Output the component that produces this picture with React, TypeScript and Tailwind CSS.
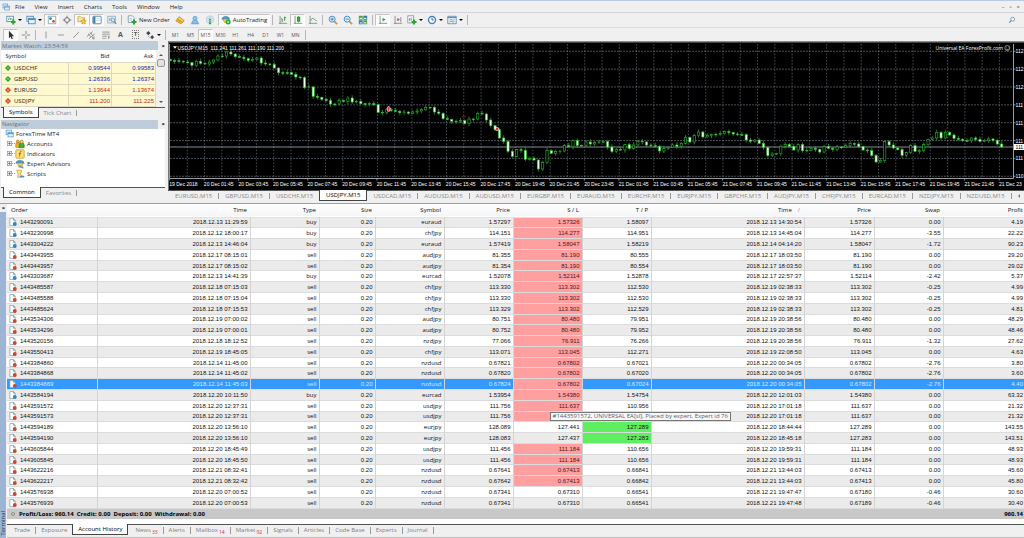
import React from 'react';
import clsx from 'clsx';

type Trade = [
  order: string,
  openTime: string,
  type: string,
  symbol: string,
  openPrice: string,
  sl: string,
  tp: string,
  closeTime: string,
  closePrice: string,
  swap: string,
  profit: string,
  hit: 'sl' | 'tp' | '',
];

const trades: Trade[] = [
  ['1443290091', '2018.12.13 11:29:59', 'buy', 'euraud', '1.57297', '1.57326', '1.58097', '2018.12.13 14:30:54', '1.57326', '0.00', '4.19', 'sl'],
  ['1443230998', '2018.12.12 18:00:17', 'buy', 'chfjpy', '114.151', '114.277', '114.951', '2018.12.13 14:45:04', '114.277', '-3.55', '22.22', 'sl'],
  ['1443304222', '2018.12.13 14:46:04', 'buy', 'euraud', '1.57419', '1.58047', '1.58219', '2018.12.14 04:14:20', '1.58047', '-1.72', '90.23', 'sl'],
  ['1443443955', '2018.12.17 08:15:01', 'sell', 'audjpy', '81.355', '81.190', '80.555', '2018.12.17 18:03:50', '81.190', '0.00', '29.20', 'sl'],
  ['1443443957', '2018.12.17 08:15:02', 'sell', 'audjpy', '81.354', '81.190', '80.554', '2018.12.17 18:03:50', '81.190', '0.00', '29.02', 'sl'],
  ['1443303687', '2018.12.13 14:41:39', 'buy', 'eurcad', '1.52078', '1.52114', '1.52878', '2018.12.17 22:57:37', '1.52114', '-2.42', '5.37', 'sl'],
  ['1443485587', '2018.12.18 07:15:03', 'sell', 'chfjpy', '113.330', '113.302', '112.530', '2018.12.19 02:38:33', '113.302', '-0.25', '4.99', 'sl'],
  ['1443485588', '2018.12.18 07:15:04', 'sell', 'chfjpy', '113.330', '113.302', '112.530', '2018.12.19 02:38:33', '113.302', '-0.25', '4.99', 'sl'],
  ['1443485624', '2018.12.18 07:15:53', 'sell', 'chfjpy', '113.329', '113.302', '112.529', '2018.12.19 02:38:33', '113.302', '-0.25', '4.81', 'sl'],
  ['1443534306', '2018.12.19 07:00:02', 'sell', 'audjpy', '80.751', '80.480', '79.951', '2018.12.19 20:38:56', '80.480', '0.00', '48.29', 'sl'],
  ['1443534296', '2018.12.19 07:00:01', 'sell', 'audjpy', '80.752', '80.480', '79.952', '2018.12.19 20:38:56', '80.480', '0.00', '48.46', 'sl'],
  ['1443520156', '2018.12.18 18:12:52', 'sell', 'nzdjpy', '77.066', '76.911', '76.266', '2018.12.19 20:38:56', '76.911', '-1.32', '27.62', 'sl'],
  ['1443550413', '2018.12.19 18:45:05', 'sell', 'chfjpy', '113.071', '113.045', '112.271', '2018.12.19 22:08:50', '113.045', '0.00', '4.63', 'sl'],
  ['1443384860', '2018.12.14 11:45:00', 'sell', 'nzdusd', '0.67821', '0.67802', '0.67021', '2018.12.20 00:34:05', '0.67802', '-2.76', '3.80', 'sl'],
  ['1443384868', '2018.12.14 11:45:02', 'sell', 'nzdusd', '0.67820', '0.67802', '0.67020', '2018.12.20 00:34:05', '0.67802', '-2.76', '3.60', 'sl'],
  ['1443384869', '2018.12.14 11:45:03', 'sell', 'nzdusd', '0.67824', '0.67802', '0.67024', '2018.12.20 00:34:05', '0.67802', '-2.76', '4.40', 'sl'],
  ['1443584194', '2018.12.20 10:11:50', 'buy', 'eurcad', '1.53954', '1.54380', '1.54754', '2018.12.20 12:01:03', '1.54380', '0.00', '63.32', 'sl'],
  ['1443591572', '2018.12.20 12:37:31', 'sell', 'usdjpy', '111.756', '111.637', '110.956', '2018.12.20 17:01:18', '111.637', '0.00', '21.32', 'sl'],
  ['1443591573', '2018.12.20 12:37:31', 'sell', 'usdjpy', '111.756', '', '', '2018.12.20 17:01:18', '111.637', '0.00', '21.32', 'sl'],
  ['1443594189', '2018.12.20 13:56:10', 'sell', 'eurjpy', '128.089', '127.441', '127.289', '2018.12.20 18:44:44', '127.289', '0.00', '143.55', 'tp'],
  ['1443594190', '2018.12.20 13:56:10', 'sell', 'eurjpy', '128.083', '127.437', '127.283', '2018.12.20 18:45:18', '127.283', '0.00', '143.51', 'tp'],
  ['1443605844', '2018.12.20 18:45:49', 'sell', 'usdjpy', '111.456', '111.184', '110.656', '2018.12.20 19:59:31', '111.184', '0.00', '48.93', 'sl'],
  ['1443605845', '2018.12.20 18:45:50', 'sell', 'usdjpy', '111.456', '111.184', '110.656', '2018.12.20 19:59:31', '111.184', '0.00', '48.93', 'sl'],
  ['1443622216', '2018.12.21 08:32:41', 'sell', 'nzdusd', '0.67641', '0.67413', '0.66841', '2018.12.21 13:44:03', '0.67413', '0.00', '45.60', 'sl'],
  ['1443622217', '2018.12.21 08:32:42', 'sell', 'nzdusd', '0.67642', '0.67413', '0.66842', '2018.12.21 13:44:03', '0.67413', '0.00', '45.80', 'sl'],
  ['1443576938', '2018.12.20 07:00:52', 'sell', 'nzdusd', '0.67341', '0.67310', '0.66541', '2018.12.21 19:47:47', '0.67180', '-0.46', '30.60', ''],
  ['1443576939', '2018.12.20 07:00:53', 'sell', 'nzdusd', '0.67341', '0.67310', '0.66541', '2018.12.21 19:47:48', '0.67189', '-0.46', '30.40', ''],
];

const SELECTED = '1443384869';
const HOVERED = '1443591573';

const quotes = [
  { symbol: 'USDCHF', bid: '0.99544', ask: '0.99583', up: true },
  { symbol: 'GBPUSD', bid: '1.26336', ask: '1.26374', up: true },
  { symbol: 'EURUSD', bid: '1.13644', ask: '1.13674', up: false },
  { symbol: 'USDJPY', bid: '111.200', ask: '111.225', up: false },
];

const chartTabs = [
  'EURUSD', 'GBPUSD', 'USDCHF', 'USDJPY', 'USDCAD', 'AUDUSD', 'AUDUSD', 'EURGBP', 'EURAUD',
  'EURCHF', 'EURJPY', 'GBPCHF', 'AUDJPY', 'CHFJPY', 'EURCAD', 'NZDJPY', 'NZDUSD',
];

const terminalTabs: { name: string; count?: number }[] = [
  { name: 'Trade' },
  { name: 'Exposure' },
  { name: 'Account History' },
  { name: 'News', count: 33 },
  { name: 'Alerts' },
  { name: 'Mailbox', count: 14 },
  { name: 'Market', count: 92 },
  { name: 'Signals' },
  { name: 'Articles' },
  { name: 'Code Base' },
  { name: 'Experts' },
  { name: 'Journal' },
];

// close of every M15 bar, in thirds of a pixel below the chart's top
const closes = [
  68, 68, 70, 72, 74, 82, 70, 76, 78, 72, 66, 54, 54, 42, 48, 56, 58, 62, 67, 64, 60, 75, 78, 79,
  90, 104, 104, 104, 109, 117, 119, 149, 147, 175, 178, 184, 188, 198, 198, 188, 190, 180, 192, 190,
  197, 199, 197, 200, 223, 223, 215, 218, 220, 224, 222, 226, 222, 219, 215, 208, 208, 222, 226, 242,
  244, 250, 251, 248, 257, 243, 243, 226, 228, 246, 263, 275, 300, 310, 340, 355, 335, 337, 364, 361,
  366, 393, 374, 338, 346, 341, 339, 323, 326, 308, 322, 322, 312, 318, 313, 312, 311, 327, 341, 334,
  336, 320, 331, 321, 310, 312, 321, 323, 325, 339, 331, 328, 321, 325, 316, 298, 312, 293, 282, 297,
  293, 289, 290, 287, 281, 284, 288, 290, 290, 306, 310, 306, 316, 328, 353, 348, 347, 325, 320, 325,
  336, 319, 338, 337, 331, 334, 342, 326, 331, 334, 327, 327, 322, 317, 318, 326, 336, 338, 352, 372,
  367, 311, 321, 330, 335, 352, 344, 323, 340, 337, 320, 304, 300, 283, 300, 283, 291, 301, 304, 308,
  308, 300, 304, 310, 307, 303, 307, 318, 327,
];

const timeLabels = ['19 Dec 2018'];
for (const day of ['20', '21']) {
  for (let h = 1; h < 23; h += 2) {
    timeLabels.push(`${day} Dec ${String(h).padStart(2, '0')}:45`);
  }
  // the last label has no room for its minutes
  timeLabels.push(day === '20' ? '20 Dec 23:45' : '21 Dec 23');
}

const priceLabels = ['112', '112', '112', '111', '111', '111', '111', '110'];

const BAR_STEP = 4.33;

const Chart: React.FC = () => (
  <svg
    aria-label="USDJPY M15 chart"
    className="block w-full bg-black"
    viewBox="0 0 856 149"
    fontFamily="Liberation Sans, sans-serif"
    fontSize="5"
    fill="#fff"
  >
    <rect width="856" height="1.5" fill="#8a8a8a" />
    <rect width="1" height="149" fill="#777" />
    <g stroke="#76828e" strokeWidth="0.6" strokeDasharray="1.6 1.6">
      {Array.from({ length: 48 }, (_, i) => (
        <line key={i} x1={19.3 + i * 17.28} x2={19.3 + i * 17.28} y1="3" y2="136" />
      ))}
      {priceLabels.map((_, i) => (
        <line key={i} x1="2" x2="845" y1={10.3 + i * 17.85} y2={10.3 + i * 17.85} strokeDasharray="2 1" />
      ))}
    </g>
    <path d="M1.5 3V137.5H845.5V3" fill="none" stroke="#c4c4c4" strokeWidth="0.8" />
    <line x1="2" x2="845" y1="106" y2="106" stroke="#8f9bab" strokeWidth="0.9" />

    {closes.map((close, i) => {
      const open = i === 0 ? 64 : closes[i - 1];
      const falling = close >= open;
      const x = 2.3 + i * BAR_STEP;
      const top = Math.min(open, close) / 3 - 3;
      const h = Math.max(Math.abs(close - open) / 3, 0.6);
      const above = 0.8 + ((i * 7) % 5) * 0.5;
      const below = 0.8 + ((i * 11) % 4) * 0.6;
      return (
        <g key={i} stroke="#29b829">
          <line x1={x} x2={x} y1={top - above} y2={top + h + below} strokeWidth="0.7" />
          <rect
            x={x - 1.1}
            y={top}
            width="2.2"
            height={h}
            fill={falling ? '#e4ffe0' : '#000'}
            strokeWidth="0.6"
          />
        </g>
      );
    })}

    <g fill="#e02020" stroke="#fff" strokeWidth="0.6">
      <path d="M220.7 65l2 2.6h-1v2.6h-2v-2.6h-1z" />
      <circle cx="329" cy="88" r="1.6" />
    </g>
    <path d="M294 75.5h4M341 107h5" stroke="#a01818" strokeWidth="0.7" />

    <path d="M5 5.2h4l-2 2.6z" />
    <text x="9.5" y="8.5">USDJPY,M15&#160; 111.241 111.261 111.190 111.200</text>
    <text x="835" y="8.8" textAnchor="end" fontSize="5" fontFamily="Open Sans, sans-serif">
      Universal EA ForexProfit.com
    </text>
    <g fill="none" stroke="#ddd" strokeWidth="0.6">
      <circle cx="839.3" cy="7" r="2.5" />
      <path d="M838.2 6.2h.5M840 6.2h.5M838 8q1.3 1 2.6 0" />
    </g>

    {timeLabels.map((label, i) => (
      <g key={label}>
        <line x1={1.5 + i * 34.57} x2={1.5 + i * 34.57} y1="137.5" y2="139.5" stroke="#c4c4c4" strokeWidth="0.7" />
        <text x={1.3 + i * 34.57} y="144.5">{label}</text>
      </g>
    ))}
    {priceLabels.map((label, i) => (
      <g key={i}>
        <line x1="845.5" x2="847.5" y1={10.3 + i * 17.85} y2={10.3 + i * 17.85} stroke="#c4c4c4" strokeWidth="0.7" />
        <text x="847.5" y={12.3 + i * 17.85}>{label}</text>
      </g>
    ))}
    <rect x="846" y="103" width="10" height="6" />
    <text x="847.5" y="108" fill="#000">111</text>
  </svg>
);

const icons: Record<string, React.ReactNode> = {
  app: (
    <g fill="#dceefa" stroke="#5b9bc8">
      <rect x="1.5" y="1.5" width="7" height="6" />
      <rect x="4" y="4.5" width="7" height="6" />
      <path d="M4 6h7" strokeWidth="1.5" />
    </g>
  ),
  newChart: (
    <g>
      <rect x="1" y="1.5" width="8" height="6.5" fill="#fff" stroke="#4d87b5" />
      <path d="M3 6l1-3M5.5 6V3.5M7.3 6V4" stroke="#3a9a3a" />
      <path d="M6 8.5h5.5M8.7 5.8v5.5" stroke="#1fae2b" strokeWidth="2.4" />
    </g>
  ),
  profiles: (
    <g fill="#e3f1fb" stroke="#4d87b5">
      <rect x="1" y="1.5" width="8" height="6" />
      <rect x="3" y="4" width="8" height="6.5" />
      <path d="M3 5.2h8" strokeWidth="1.6" />
    </g>
  ),
  market: (
    <g>
      <rect x="1.5" y="1.5" width="9" height="9" fill="#fff" stroke="#7fa8c9" />
      <circle cx="4.3" cy="4.3" r="1.7" fill="#22a63a" />
      <circle cx="7.8" cy="7.6" r="1.7" fill="#e0482c" />
    </g>
  ),
  target: (
    <g fill="none" stroke="#6f6f6f">
      <circle cx="6" cy="6" r="3" />
      <path d="M6 0.8v3.4M6 7.8v3.4M0.8 6h3.4M7.8 6h3.4" />
    </g>
  ),
  star: (
    <g>
      <path d="M1 2h3.5l1 1.2H9V8H1z" fill="#ffe69a" stroke="#c9982a" strokeWidth="0.8" />
      <path d="M7.8 4.6l1 2.1 2.2.3-1.6 1.5.4 2.3-2-1.1-2 1.1.4-2.3L4.6 7l2.2-.3z" fill="#ffcf3d" stroke="#b98513" strokeWidth="0.7" />
    </g>
  ),
  panel: (
    <g>
      <rect x="1" y="1.5" width="10" height="9" rx="1" fill="#fff" stroke="#3f7cb0" />
      <rect x="1.5" y="2" width="2.6" height="8" fill="#3f7cb0" />
      <path d="M5.5 4.5h4M5.5 6.5h4" stroke="#b9d3e8" />
    </g>
  ),
  tester: (
    <g fill="none">
      <rect x="1" y="1.5" width="9" height="8" fill="#eef5fb" stroke="#88a9c4" />
      <path d="M3 7V4M5 7.5V3" stroke="#7a96ac" />
      <circle cx="7" cy="6" r="2.2" fill="#d5e8f7" stroke="#6e97b7" />
      <path d="M8.6 7.8l2.4 3" stroke="#8a7a5a" strokeWidth="1.4" />
    </g>
  ),
  order: (
    <g>
      <path d="M1.5 1h5l2 2v6h-7z" fill="#fff" stroke="#7a93a8" />
      <path d="M3 4h3M3 6h3" stroke="#9bb" />
      <path d="M5.4 8.4h6M8.4 5.4v6" stroke="#1fae2b" strokeWidth="2.4" />
    </g>
  ),
  gold: (
    <g stroke="#b97d12" strokeWidth="0.7">
      <path d="M1 7L5 2.2l6 4.6-4 3.8z" fill="#eda92a" />
      <path d="M3 4.6L5 2.2l6 4.6-1.8 1.7z" fill="#fbd56b" />
    </g>
  ),
  person: (
    <g fill="#8cc4ee" stroke="#4d8dc0" strokeWidth="0.7">
      <circle cx="6" cy="4" r="2.5" />
      <path d="M2 10q.4-4 4-3.5 3.6-.5 4 3.5z" />
      <path d="M1 10.6h10" />
    </g>
  ),
  signal: (
    <g fill="none" stroke="#a9c9e2">
      <circle cx="6" cy="5.5" r="4.5" />
      <circle cx="6" cy="5.5" r="2.6" />
      <path d="M6 5.5L4.5 11h3z" fill="#35a848" stroke="none" />
      <circle cx="6" cy="5.5" r="1.3" fill="#35a848" stroke="none" />
    </g>
  ),
  auto: (
    <g>
      <path d="M1 5q0-2.6 4.5-3.6Q10 2 10.5 5z" fill="#4c9fd6" stroke="#2f6f9e" strokeWidth="0.6" />
      <path d="M2.5 5h6.5l-1 4h-4z" fill="#f6cf5b" stroke="#a98316" strokeWidth="0.6" />
      <circle cx="8.6" cy="8.4" r="3" fill="#1fa637" />
      <path d="M7.8 6.9v3l2.3-1.5z" fill="#fff" />
    </g>
  ),
  bars: (
    <g fill="none" stroke="#777" strokeWidth="0.9">
      <path d="M2.5 1v9.5M1 10h10" />
      <path d="M5 4.5v4M5 4.5H4M8 2v5M8 3h1.5" stroke="#2f9a3c" strokeWidth="1.2" />
    </g>
  ),
  candles: (
    <g fill="none" stroke="#777" strokeWidth="0.9">
      <path d="M2.5 1v9.5M1 10h10" />
      <path d="M6.8 1v8" stroke="#2f9a3c" />
      <rect x="5.4" y="2.6" width="2.8" height="4.8" fill="#2fb43f" stroke="#1d7f2b" />
    </g>
  ),
  line: (
    <g fill="none" stroke="#777" strokeWidth="0.9">
      <path d="M2.5 1v9.5M1 10h10" />
      <path d="M3 7q2-4.5 4-2.5t3.5 2.5" stroke="#2f9a3c" />
    </g>
  ),
  zoomIn: (
    <g fill="none">
      <path d="M7 7l4 4" stroke="#c79a38" strokeWidth="2" />
      <circle cx="5" cy="5" r="3.6" fill="#d9efff" stroke="#3e88c0" strokeWidth="1.1" />
      <path d="M3.2 5h3.6M5 3.2v3.6" stroke="#2b6fa8" />
    </g>
  ),
  zoomOut: (
    <g fill="none">
      <path d="M7 7l4 4" stroke="#c79a38" strokeWidth="2" />
      <circle cx="5" cy="5" r="3.6" fill="#d9efff" stroke="#3e88c0" strokeWidth="1.1" />
      <path d="M3.2 5h3.6" stroke="#2b6fa8" />
    </g>
  ),
  tile: (
    <g>
      <path d="M1 1h4.6v4.6H1zM6.4 6.4H11V11H6.4z" fill="#3fa83c" />
      <path d="M6.4 1H11v4.6H6.4zM1 6.4h4.6V11H1z" fill="#3572b3" />
      <path d="M2 3.2h2.6v1.6H2zM7.4 3.2H10v1.6H7.4zM2 8.6h2.6v1.6H2zM7.4 8.6H10v1.6H7.4z" fill="#e4f3e4" />
    </g>
  ),
  scroll: (
    <g fill="none" stroke="#777" strokeWidth="0.9">
      <path d="M2.5 1v9.5M1 10h10" />
      <path d="M5.5 3.2v4.6L9 5.5z" fill="#2fa53d" stroke="none" />
    </g>
  ),
  shift: (
    <g fill="none" stroke="#777" strokeWidth="0.9">
      <path d="M2.5 1v9.5M1 10h10M9.3 2.5v6" />
      <path d="M5.2 3.5v4l3-2z" fill="#b04a3a" stroke="none" />
    </g>
  ),
  indicator: (
    <g>
      <rect x="1" y="1" width="7" height="8.5" fill="#fff" stroke="#7a93a8" />
      <path d="M3 7V4M5 7V3" stroke="#3a9a3a" />
      <path d="M5.4 8.4h6M8.4 5.4v6" stroke="#1fae2b" strokeWidth="2.4" />
    </g>
  ),
  clock: (
    <g>
      <circle cx="6" cy="6" r="5" fill="#3c82c4" />
      <circle cx="6" cy="6" r="3.4" fill="#fff" />
      <path d="M6 3.6V6h2" fill="none" stroke="#345" />
    </g>
  ),
  template: (
    <g fill="none">
      <rect x="1" y="1.5" width="10" height="9" fill="#eef5fb" stroke="#5b8db5" />
      <path d="M1 3h10" stroke="#5b8db5" strokeWidth="1.4" />
      <path d="M3 6.2l2-1 2 1 2-1" stroke="#c77" />
      <path d="M3 8.5l2-1 2 1 2-1" stroke="#4a4" />
    </g>
  ),
  cursor: <path d="M3.5 1v9l2-2 1.3 3 1.4-.6L7 7.6h2.8z" fill="#333" />,
  cross: <path d="M6 1v4M6 7v4M1 6h4M7 6h4" stroke="#777" />,
  vline: <path d="M6 2v8" stroke="#888" />,
  hline: <path d="M2.5 6h7" stroke="#888" />,
  trend: <path d="M2.5 9.5l7-7" stroke="#888" />,
  channel: (
    <g stroke="#777" strokeWidth="0.9">
      <path d="M1 8l7-6M3.5 10.5l7-6M2.5 4.5L6 8M5 3l3.5 4" />
      <path d="M8 8.5h2.5M8 10.5h2.5M8 8.5v2" />
    </g>
  ),
  fibo: (
    <g stroke="#888">
      <path d="M1.5 2.5h9M1.5 5h9M1.5 7.5h6" />
      <path d="M9 7v4M9 7.5h2M9 9.2h1.6M1.5 10h5" strokeWidth="0.8" />
    </g>
  ),
  arrows: (
    <g fill="#444">
      <path d="M4 1.2l2.6 2.6L4 6.4 1.4 3.8z" />
      <path d="M8.6 6.4l2 2.2-2 2.2-2-2.2zM3.5 7.2l2 2" stroke="#444" strokeWidth="0.5" />
    </g>
  ),
  search: (
    <g fill="none" stroke="#4b86b8">
      <circle cx="7" cy="4.8" r="3" />
      <path d="M4.8 7L1.8 10" strokeWidth="1.6" />
    </g>
  ),
  accounts: (
    <g strokeWidth="0.7">
      <path d="M1 10V6q0-2 2.4-2T6 6v4z" fill="#e8b62c" stroke="#96701a" />
      <circle cx="3.4" cy="3" r="1.8" fill="#e8b62c" stroke="#96701a" />
      <path d="M5 10.5V7q0-2.4 3-2.4T11 7v3.5z" fill="#46ab35" stroke="#2a701d" />
      <circle cx="8" cy="3.4" r="2" fill="#f1cf62" stroke="#96701a" />
    </g>
  ),
  fx: (
    <g>
      <rect x="1" y="1" width="10" height="10" rx="1" fill="#ffe07a" stroke="#c99e2d" />
      <path d="M7.8 3q-1.6-.6-1.8 1.2L5.2 9M4.4 5.6h3" fill="none" stroke="#8a6410" />
    </g>
  ),
  expert: (
    <g>
      <path d="M1 5q0-3 5-3.6Q11 2 11 5z" fill="#4c9fd6" stroke="#2f6f9e" strokeWidth="0.6" />
      <path d="M3 5h6.5l-1 5h-4z" fill="#f6cf5b" stroke="#a98316" strokeWidth="0.6" />
      <path d="M5 8l5 3" stroke="#4c9fd6" strokeWidth="1.6" />
    </g>
  ),
  script: (
    <g>
      <path d="M2 1.5h6L6.5 6 9 10H3l1-4z" fill="#ffe28a" stroke="#c79a2c" strokeWidth="0.8" />
      <path d="M6 9.2q3-1.6 5 .6" fill="none" stroke="#3f87bd" strokeWidth="1.6" />
    </g>
  ),
};

const Icon: React.FC<{ name: string; className?: string }> = ({ name, className }) => (
  <svg viewBox="0 0 12 12" fill="none" aria-hidden="true" className={clsx('shrink-0', className ?? 'size-[10px]')}>
    {icons[name]}
  </svg>
);

const Caret = () => <span className="border-x-2 border-t-2 border-x-transparent border-t-black" />;
const Grip = () => <span className="mx-[2px] h-[10px] w-px bg-[#b5b5b5]" />;

interface ToolProps {
  label: string;
  icon?: string;
  active?: boolean;
  caret?: boolean;
  wide?: boolean;
  children?: React.ReactNode;
}

const Tool: React.FC<ToolProps> = ({ label, icon, active, caret, wide, children }) => (
  <button
    type="button"
    aria-label={label}
    className={clsx(
      'flex h-3 items-center justify-center gap-[2px] border',
      caret ? 'w-5' : wide ? 'px-[2px]' : 'w-[15px]',
      active ? 'border-[#c3c3c3] border-r-white border-b-white bg-[#fafafa]' : 'border-transparent',
    )}
  >
    {icon && <Icon name={icon} />}
    {children}
    {caret && <Caret />}
  </button>
);

const PanelTitle: React.FC<{ title: string }> = ({ title }) => (
  <div className="flex h-[9px] items-center justify-between">
    <span className="mr-[4px] flex h-full grow items-center bg-[#bfcddb] pl-px text-[#66737f]">{title}</span>
    <button type="button" aria-label={`Close ${title}`} className="font-bold text-black">×</button>
  </div>
);

const PanelTabs: React.FC<{ active: string; other: string }> = ({ active, other }) => (
  <div className="flex h-[11px] border-t border-[#555] pl-[2px] text-[#888]">
    <button type="button" className="-mt-px border border-t-0 border-[#444] bg-white px-[5px] text-black">{active}</button>
    <button type="button" className="px-[5px]">{other}</button>
    <span className="my-[2px] w-px bg-[#999]" />
  </div>
);

const MarketWatch = () => (
  <section className="bg-[#f0f0f0]">
    <PanelTitle title="Market Watch: 23:54:59" />
    <div className="flex bg-white">
      <table className="grow table-fixed border-collapse">
        <colgroup>
          <col className="w-[67px]" />
          <col />
          <col className="w-11" />
        </colgroup>
        <thead>
          <tr className="h-3">
            <th className="pl-1 text-left font-normal">Symbol</th>
            <th className="pr-[2px] text-right font-normal">Bid</th>
            <th className="pr-[2px] text-right font-normal">Ask</th>
          </tr>
        </thead>
        <tbody>
          {quotes.map(({ symbol, bid, ask, up }) => (
            <tr key={symbol} className="h-[11px] border border-[#ddd9c0] bg-[#fff9cf]">
              <td className="border-r border-[#ddd9c0] pl-[3px]">
                <span className="flex items-center gap-[3px]">
                  <svg viewBox="0 0 6 6" className="size-[6px]" aria-hidden="true">
                    <path d="M3 0l3 3-3 3-3-3z" fill={up ? '#2a9d2a' : '#d4471d'} />
                    <path d={up ? 'M3 1.4L4.6 3.4H1.4z' : 'M3 4.6L4.6 2.6H1.4z'} fill="#fff" opacity="0.5" />
                  </svg>
                  {symbol}
                </span>
              </td>
              {[bid, ask].map((price) => (
                <td
                  key={price}
                  className={clsx(
                    "border-r border-[#ddd9c0] pr-px text-right font-['Liberation_Sans',sans-serif]",
                    up ? 'text-[#2020b0]' : 'text-[#c22a1a]',
                  )}
                >
                  {price}
                </td>
              ))}
            </tr>
          ))}
        </tbody>
      </table>
      <div className="flex w-[9px] flex-col items-center bg-[#f0f0f0] py-1">
        <span className="border-x-2 border-b-2 border-x-transparent border-b-[#555]" />
        <span className="mt-[3px] h-2 w-[8px] rounded-xs border border-[#999] bg-[#e2e2e2]" />
        <span className="mt-auto border-x-2 border-t-2 border-x-transparent border-t-[#555]" />
      </div>
    </div>
    <PanelTabs active="Symbols" other="Tick Chart" />
  </section>
);

const navItems = [
  { label: 'Accounts', icon: 'accounts' },
  { label: 'Indicators', icon: 'fx' },
  { label: 'Expert Advisors', icon: 'expert' },
  { label: 'Scripts', icon: 'script' },
];

const Navigator = () => (
  <section className="mt-[2px] flex grow flex-col">
    <PanelTitle title="Navigator" />
    <ul className="grow bg-white pl-1">
      <li className="flex h-[10px] items-center gap-[2px]">
        <Icon name="app" className="size-[9px]" />
        ForexTime MT4
      </li>
      {navItems.map(({ label, icon }) => (
        <li key={label} className="flex h-[10px] items-center pl-[2px]">
          <svg viewBox="0 0 8 8" className="size-[5px]" fill="none" stroke="#8a8a8a" aria-hidden="true">
            <rect x="0.5" y="0.5" width="7" height="7" fill="#f4f4f4" />
            <path d="M2 4h4M4 2v4" stroke="#446" />
          </svg>
          <span className="w-[3px] border-t border-dotted border-[#999]" />
          <Icon name={icon} className="mr-[2px] size-[10px]" />
          {label}
        </li>
      ))}
    </ul>
    <PanelTabs active="Common" other="Favorites" />
  </section>
);

const TradeRow: React.FC<{ trade: Trade; index: number }> = ({ trade, index }) => {
  const [order, openTime, type, symbol, openPrice, sl, tp, closeTime, closePrice, swap, profit, hit] = trade;
  const selected = order === SELECTED;
  const td = 'border-r border-[#d4d4d4] pr-[2px]';
  return (
    <tr
      className={clsx(
        'border-b border-[#dcdcdc]',
        selected ? 'bg-[#3399ff] text-[#d5e9ff]' : index % 2 === 0 ? 'bg-[#ebebeb]' : 'bg-white',
      )}
    >
      <td className="border-r border-[#d4d4d4] pl-[2px] text-left">
        <span className="flex items-center gap-[3px]">
          <svg viewBox="0 0 9 9" className="size-[8px]" aria-hidden="true">
            <path d="M1 .5h4L7 2.5v6H1z" fill="#fff" stroke="#8a98a5" strokeWidth="0.8" />
            <path d="M5 .5v2h2" fill="none" stroke="#4d9a7a" strokeWidth="0.8" />
            <circle cx="6.5" cy="6.7" r="2.2" fill={type === 'buy' ? '#2f86c9' : '#d1452e'} />
          </svg>
          {order}
        </span>
      </td>
      <td className={td}>{openTime}</td>
      <td className={clsx(td, "font-['Open_Sans',sans-serif]")}>{type}</td>
      <td className={td}>0.20</td>
      <td className={clsx(td, "font-['Open_Sans',sans-serif]")}>{symbol}</td>
      <td className={td}>{openPrice}</td>
      <td className={clsx(td, 'relative', hit === 'sl' && 'bg-[#ff9f9f] text-[#4a1818]')}>
        {sl}
        {order === HOVERED && (
          <span
            role="tooltip"
            className="absolute inset-y-0 left-9 z-10 flex items-center border border-[#767676] bg-[#f8f8fb] px-[2px] font-['Open_Sans',sans-serif] whitespace-nowrap text-[#5c5c68]"
          >
            #1443591572, UNIVERSAL EA[sl], Placed by expert, Expert id 76
          </span>
        )}
      </td>
      <td className={clsx(td, hit === 'tp' && 'bg-[#5fee5f]')}>{tp}</td>
      <td className={td}>{closeTime}</td>
      <td className={td}>{closePrice}</td>
      <td className={td}>{swap}</td>
      <td className="pr-px">{profit}</td>
    </tr>
  );
};

const AccountHistory = () => (
  <table className="h-[305px] w-full table-fixed border-collapse bg-white text-right font-['Liberation_Sans',sans-serif] text-[#111]">
    <colgroup>
      <col className="w-[90px]" />
      <col className="w-[153px]" />
      <col className="w-[69px]" />
      <col className="w-14" />
      <col className="w-[69px]" />
      <col className="w-[69px]" />
      <col className="w-[69px]" />
      <col className="w-[69px]" />
      <col className="w-[153px]" />
      <col className="w-[70px]" />
      <col className="w-[69px]" />
      <col />
    </colgroup>
    <thead className="font-['Open_Sans',sans-serif]">
      <tr className="h-[13px] border-b border-[#e2e2e2] bg-linear-to-b from-white to-[#f4f5f7]">
        <th className="pl-1 text-left font-normal">Order</th>
        {['Time', 'Type', 'Size', 'Symbol', 'Price', 'S / L', 'T / P'].map((name) => (
          <th key={name} className="pr-[3px] font-normal">{name}</th>
        ))}
        <th className="pr-1 font-normal">
          Time<span className="pl-[6px] text-[#888]">∕</span>
        </th>
        <th className="pr-[3px] font-normal">Price</th>
        <th className="pr-[3px] font-normal">Swap</th>
        <th className="pr-px font-normal">Profit</th>
      </tr>
    </thead>
    <tbody>
      {trades.map((trade, index) => (
        <TradeRow key={trade[0]} trade={trade} index={index} />
      ))}
    </tbody>
  </table>
);

const Terminal = () => (
  <section className="flex border-t border-[#a0a0a0]">
    <div className="flex w-[7px] shrink-0 flex-col items-center">
      <button type="button" aria-label="Close terminal" className="h-2 font-bold text-black">×</button>
      <div className="flex w-[6px] grow items-end justify-center self-start bg-[#9cb5d4] pb-[2px]">
        <span className="rotate-180 text-[#26364a] [writing-mode:vertical-rl]">Terminal</span>
      </div>
    </div>
    <div className="min-w-0 grow">
      <AccountHistory />
      <div className="flex h-[10px] items-center bg-[#c8c8c8] pr-px font-bold text-black">
        <span className="mr-1 ml-1 size-[4px] rounded-full border border-[#8f8f8f]" />
        <span>Profit/Loss: 960.14&nbsp; Credit: 0.00&nbsp; Deposit: 0.00&nbsp; Withdrawal: 0.00</span>
        <span className="ml-auto">960.14</span>
      </div>
      <div className="h-[5px] bg-white" />
      <nav className="flex h-[14px] items-start border-t border-b border-t-[#555] border-b-[#c0c0c0] pl-[2px] text-[#808080]">
        {terminalTabs.map(({ name, count }, i) =>
          name === 'Account History' ? (
            <button key={name} type="button" className="-mt-px mr-[2px] h-[11px] border border-t-0 border-[#444] bg-white px-[5px] text-black">
              {name}
            </button>
          ) : (
            <React.Fragment key={name}>
              <button type="button" className="flex h-[10px] items-center px-[5px]">
                {name}
                {count && <span className="pt-[3px] pl-px text-[5px] text-[#d03030]">{count}</span>}
              </button>
              {i !== 1 && <span className="mt-[2px] h-[7px] w-px bg-[#999]" />}
            </React.Fragment>
          ),
        )}
      </nav>
    </div>
  </section>
);

const Toolbars = () => (
  <div className="text-[#222]">
    <div className="flex h-[15px] items-center border-t border-[#d5d5d5] pl-1">
      <Tool label="New chart" icon="newChart" caret />
      <Tool label="Profiles" icon="profiles" caret />
      <Tool label="Market Watch" icon="market" active />
      <Tool label="Data Window" icon="target" />
      <Tool label="Navigator" icon="star" active />
      <Tool label="Terminal" icon="panel" active />
      <Tool label="Strategy Tester" icon="tester" />
      <Grip />
      <Tool label="New Order" icon="order" wide>New Order</Tool>
      <Tool label="MetaEditor" icon="gold" />
      <Tool label="Community" icon="person" />
      <Tool label="Signals" icon="signal" />
      <Tool label="AutoTrading" icon="auto" active wide>AutoTrading</Tool>
      <Grip />
      <Tool label="Bar chart" icon="bars" />
      <Tool label="Candlesticks" icon="candles" active />
      <Tool label="Line chart" icon="line" />
      <Grip />
      <Tool label="Zoom in" icon="zoomIn" />
      <Tool label="Zoom out" icon="zoomOut" />
      <Tool label="Tile windows" icon="tile" />
      <Grip />
      <Tool label="Auto scroll" icon="scroll" active />
      <Tool label="Chart shift" icon="shift" />
      <Tool label="Indicators" icon="indicator" caret />
      <Tool label="Periods" icon="clock" caret />
      <Tool label="Templates" icon="template" caret />
      <Grip />
      <button type="button" aria-label="Search" className="mr-2 ml-auto">
        <Icon name="search" className="block size-2" />
      </button>
    </div>
    <div className="flex h-[14px] items-center border-t border-[#dcdcdc] pl-[3px] text-[5px] text-[#555]">
      <Tool label="Cursor" icon="cursor" active />
      <Tool label="Crosshair" icon="cross" />
      <Grip />
      <Tool label="Vertical line" icon="vline" />
      <Tool label="Horizontal line" icon="hline" />
      <Tool label="Trendline" icon="trend" />
      <Tool label="Equidistant channel" icon="channel" />
      <Tool label="Fibonacci" icon="fibo" />
      <Tool label="Text"><span className="text-[7px] font-bold">A</span></Tool>
      <Tool label="Text label">
        <span className="border border-dotted border-[#777] px-px text-[6px] leading-[7px] font-bold">T</span>
      </Tool>
      <Tool label="Arrows" icon="arrows" caret />
      <Grip />
      {['M1', 'M5', 'M15', 'M30', 'H1', 'H4', 'D1', 'W1', 'MN'].map((period) => (
        <Tool key={period} label={period} active={period === 'M15'}>{period}</Tool>
      ))}
      <Grip />
    </div>
  </div>
);

export default function App() {
  return (
    <div className="bg-[#f0f0f0] font-['Open_Sans',sans-serif] text-[6px] leading-[8px] text-[#222]">
      <header className="flex h-3 items-center border-t border-[#b9cbe0] pl-[2px]">
        <Icon name="app" className="size-2" />
        {['File', 'View', 'Insert', 'Charts', 'Tools', 'Window', 'Help'].map((item) => (
          <button key={item} type="button" className="px-[5px]">{item}</button>
        ))}
        <div className="ml-auto flex gap-[5px] pr-1 text-[#555]">
          <button type="button" aria-label="Minimize">–</button>
          <button type="button" aria-label="Restore">▫</button>
          <button type="button" aria-label="Close">×</button>
        </div>
      </header>
      <Toolbars />
      <main className="flex">
        <aside className="flex w-[165px] shrink-0 flex-col pb-[5px] pl-px">
          <MarketWatch />
          <Navigator />
        </aside>
        <div className="ml-[3px] min-w-0 grow">
          <Chart />
          <nav className="flex h-[13px] items-start border-t border-[#555] pl-px text-[#888]">
            {chartTabs.map((symbol, i) =>
              symbol === 'USDJPY' ? (
                <button key={i} type="button" className="-mt-px h-[11px] border border-t-0 border-[#444] bg-white px-[6px] text-black">
                  {symbol},M15
                </button>
              ) : (
                <React.Fragment key={i}>
                  <button type="button" className="h-[10px] px-[6px]">{symbol},M15</button>
                  {i !== 2 && <span className="mt-[2px] h-[6px] w-px bg-[#999]" />}
                </React.Fragment>
              ),
            )}
            <span className="mt-[3px] mr-1 ml-auto border-y-2 border-r-2 border-y-transparent border-r-[#777]" />
          </nav>
        </div>
      </main>
      <Terminal />
    </div>
  );
}
